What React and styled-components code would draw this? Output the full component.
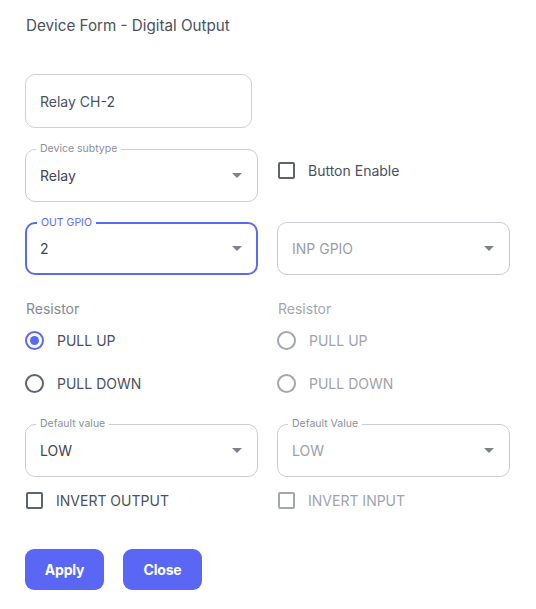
import React from "react";
import styled, { createGlobalStyle } from "styled-components";

const Global = createGlobalStyle`
  html, body { margin: 0; padding: 0; background: #ffffff; }
  body { font-family: Inter, "Noto Sans", sans-serif; -webkit-font-smoothing: antialiased; }
`;

const Page = styled.div`
  width: 536px;
  padding: 18px 25px 0 25px;
  box-sizing: border-box;
`;

const Title = styled.div`
  font-size: 15.2px;
  line-height: 16px;
  color: #4a5161;
  margin-left: 1px;
`;

const NameBox = styled.div`
  margin-top: 40px;
  width: 227px;
  height: 54px;
  box-sizing: border-box;
  border: 1px solid #cdd0d6;
  border-radius: 10px;
  display: flex;
  align-items: center;
  padding-left: 14px;
  font-size: 14px;
  color: #4a5161;
`;

const Grid = styled.div`
  margin-top: 21px;
  display: grid;
  grid-template-columns: 233px 233px;
  column-gap: 19px;
`;

const Row = styled.div`
  display: contents;
`;

const Field = styled.div`
  position: relative;
  height: 53px;
  box-sizing: border-box;
  border: ${(p) => (p.$focused ? "2px solid #5a6bf3" : "1px solid #c9ccd3")};
  border-radius: 10px;
  display: flex;
  align-items: center;
  justify-content: space-between;
  padding: 0 ${(p) => (p.$focused ? "13px" : "14px")};
  margin-top: ${(p) => p.$mt || 0}px;
`;

const FloatLabel = styled.span`
  position: absolute;
  left: 10px;
  top: -7px;
  padding: 0 4px;
  background: #fff;
  font-size: 10.5px;
  line-height: 12px;
  color: ${(p) => (p.$focused ? "#5a6bf3" : "#8c9098")};
`;

const Value = styled.span`
  font-size: 14px;
  color: ${(p) => (p.$muted ? "#9a9ea6" : "#3f4553")};
`;

const Arrow = styled.span`
  width: 0;
  height: 0;
  border-left: 5px solid transparent;
  border-right: 5px solid transparent;
  border-top: 5px solid #7d818a;
  margin-right: 1px;
`;

const CheckRow = styled.label`
  display: flex;
  align-items: center;
  gap: 13px;
  margin-top: ${(p) => p.$mt || 0}px;
  margin-left: 1px;
  font-size: 14px;
  color: ${(p) => (p.$disabled ? "#a0a4ab" : "#4a5161")};
  height: 18px;
`;

const Box = styled.span`
  width: 17px;
  height: 17px;
  box-sizing: border-box;
  border: 2px solid ${(p) => (p.$disabled ? "#a2a6ae" : "#5d6373")};
  border-radius: 2px;
`;

const Group = styled.div`
  margin-top: 26px;
  display: flex;
  flex-direction: column;
`;

const GroupLabel = styled.div`
  font-size: 14px;
  line-height: 16px;
  color: ${(p) => (p.$disabled ? "#a3a7ae" : "#858a93")};
  margin-left: 1px;
`;

const RadioRow = styled.div`
  display: flex;
  align-items: center;
  gap: 13px;
  height: 20px;
  margin-top: ${(p) => p.$mt}px;
  font-size: 14px;
  color: ${(p) => (p.$disabled ? "#a0a4ab" : "#4a5161")};
`;

const Circle = styled.span`
  width: 19px;
  height: 19px;
  box-sizing: border-box;
  border-radius: 50%;
  border: 2px solid
    ${(p) => (p.$checked ? "#5a6bf3" : p.$disabled ? "#a2a6ae" : "#5d6373")};
  display: flex;
  align-items: center;
  justify-content: center;
  &::after {
    content: "";
    display: ${(p) => (p.$checked ? "block" : "none")};
    width: 9px;
    height: 9px;
    border-radius: 50%;
    background: #5a6bf3;
  }
`;

const Buttons = styled.div`
  display: flex;
  gap: 19px;
  margin-top: 40px;
`;

const Button = styled.button`
  width: 79px;
  height: 41px;
  border: none;
  border-radius: 9px;
  background: #5a67f5;
  color: #fff;
  font-family: Inter, "Noto Sans", sans-serif;
  font-weight: 700;
  font-size: 14px;
  letter-spacing: -0.2px;
  padding: 0;
`;

function Select({ label, value, focused, muted, mt }) {
  return (
    <Field $focused={focused} $mt={mt}>
      {label && <FloatLabel $focused={focused}>{label}</FloatLabel>}
      <Value $muted={muted}>{value}</Value>
      <Arrow />
    </Field>
  );
}

function RadioGroup({ disabled, selected }) {
  return (
    <Group>
      <GroupLabel $disabled={disabled}>Resistor</GroupLabel>
      <RadioRow $mt={13} $disabled={disabled}>
        <Circle $checked={selected === "up"} $disabled={disabled} />
        PULL UP
      </RadioRow>
      <RadioRow $mt={23} $disabled={disabled}>
        <Circle $checked={selected === "down"} $disabled={disabled} />
        PULL DOWN
      </RadioRow>
    </Group>
  );
}

export default function App() {
  return (
    <>
      <Global />
      <Page>
        <Title>Device Form - Digital Output</Title>
        <NameBox>Relay CH-2</NameBox>
        <Grid>
          <Row>
            <Select label="Device subtype" value="Relay" />
            <div>
              <CheckRow $mt={12}>
                <Box />
                Button Enable
              </CheckRow>
            </div>
          </Row>
          <Row>
            <Select label="OUT GPIO" value="2" focused mt={20} />
            <Select value="INP GPIO" muted mt={20} />
          </Row>
          <Row>
            <RadioGroup selected="up" />
            <RadioGroup disabled />
          </Row>
          <Row>
            <Select label="Default value" value="LOW" mt={31} />
            <Select label="Default Value" value="LOW" muted mt={31} />
          </Row>
          <Row>
            <CheckRow $mt={14}>
              <Box />
              INVERT OUTPUT
            </CheckRow>
            <CheckRow $mt={14} $disabled>
              <Box $disabled />
              INVERT INPUT
            </CheckRow>
          </Row>
        </Grid>
        <Buttons>
          <Button>Apply</Button>
          <Button>Close</Button>
        </Buttons>
      </Page>
    </>
  );
}
